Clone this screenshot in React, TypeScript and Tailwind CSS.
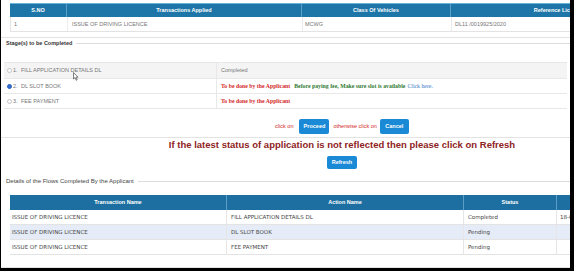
import React from "react";

const stages = [
  { no: "1.", name: "FILL APPLICATION DETAILS DL", done: true, checked: false },
  { no: "2.", name: "DL SLOT BOOK", done: false, checked: true },
  { no: "3.", name: "FEE PAYMENT", done: false, checked: false },
];

const flows = [
  { action: "FILL APPLICATION DETAILS DL", status: "Completed", date: "18-0" },
  { action: "DL SLOT BOOK", status: "Pending", date: "" },
  { action: "FEE PAYMENT", status: "Pending", date: "" },
];

function Legend({ title, bold }: { title: string; bold?: boolean }) {
  return (
    <div className="flex items-center h-[8px] pl-[5px]">
      <span className={bold ? "text-[5.5px] font-bold text-[#333] whitespace-nowrap" : "text-[6px] text-[#444] whitespace-nowrap"}>
        {title}
      </span>
      <div className="flex-1 ml-[4px] border-t border-[#dddddd]" />
    </div>
  );
}

export default function App() {
  return (
    <div className="w-[574px] h-[271px] bg-black overflow-hidden">
      <div className="ml-[1px] w-[569px] h-[268px] bg-white overflow-hidden relative">
        <div className="w-[682px] font-['Liberation_Sans',Arial,sans-serif]">
          {/* Applied transaction */}
          <div className="pt-[3px] pl-[9px]">
            <div className="grid grid-cols-[57px_235px_149px_223px] h-[14px] bg-[#1e76a8] border-t border-[#6ab4dc] text-white text-[5.5px] font-bold">
              <div className="flex items-center justify-center border-r border-[#5a9dc6]">S.NO</div>
              <div className="flex items-center justify-center border-r border-[#5a9dc6]">Transactions Applied</div>
              <div className="flex items-center justify-center border-r border-[#5a9dc6]">Class Of Vehicles</div>
              <div className="flex items-center justify-center">Reference Licence No</div>
            </div>
            <div className="grid grid-cols-[57px_235px_149px_223px] h-[15px] border-b border-l border-[#e3e3e3] text-[5.5px] text-[#777]">
              <div className="flex items-center pl-[3px] border-r border-[#ececec]">1</div>
              <div className="flex items-center pl-[4px] border-r border-[#ececec]">ISSUE OF DRIVING LICENCE</div>
              <div className="flex items-center pl-[2px] border-r border-[#ececec]">MCWG</div>
              <div className="flex items-center pl-[3px]">DL11 /0019925/2020</div>
            </div>
          </div>
          <div className="mt-[5px] border-t border-[#e3e3e3]" />

          {/* Stages */}
          <div className="mt-[1px]">
            <Legend title="Stage(s) to be Completed" bold />
          </div>
          <div className="mt-[15px] ml-[3px] w-[563px] border-t border-[#e8e8e8]">
            {stages.map((s, i) => (
              <div
                key={i}
                className={
                  i === 0
                    ? "grid grid-cols-[213px_1fr] h-[16px] bg-[#f4f4f4] border-b border-[#e8e8e8]"
                    : "grid grid-cols-[213px_1fr] h-[15px] border-b border-[#e8e8e8]"
                }
              >
                <div className="flex items-center pl-[3px] border-r border-[#e8e8e8] text-[5.5px] text-[#777]">
                  {s.checked ? (
                    <span className="w-[5px] h-[5px] rounded-full bg-[#2f6fd6] border border-[#2a5fb8]" />
                  ) : (
                    <span className="w-[5px] h-[5px] rounded-full border border-[#c4c4c4] bg-white" />
                  )}
                  <span className="ml-[1px] w-[8px]">{s.no}</span>
                  <span>{s.name}</span>
                </div>
                <div className="flex items-center pl-[4px] whitespace-nowrap">
                  {s.done ? (
                    <span className="text-[5.5px] text-[#777]">Completed</span>
                  ) : (
                    <span className="font-['Liberation_Serif','Times_New_Roman',serif] text-[5.8px] font-bold">
                      <span className="text-[#d22a2a]">To be done by the Applicant</span>
                      {i === 1 && (
                        <>
                          <span className="text-[#2f7a2f] ml-[4px]">Before paying fee, Make sure slot is available</span>
                          <span className="text-[#3a78c8] font-normal ml-[2px]">Click here.</span>
                        </>
                      )}
                    </span>
                  )}
                </div>
              </div>
            ))}
          </div>

          {/* Proceed / cancel */}
          <div className="mt-[10px] h-[15px] flex items-center justify-center text-[5.5px] text-[#d22a2a]">
            <span>click on</span>
            <button className="ml-[6px] w-[30px] h-[15px] rounded-[2px] bg-[#1a8ad6] text-white font-bold">Proceed</button>
            <span className="ml-[4px]">otherwise click on</span>
            <button className="ml-[3px] w-[29px] h-[15px] rounded-[2px] bg-[#1a8ad6] text-white font-bold">Cancel</button>
          </div>
          <div className="mt-[3px] border-t border-[#e3e3e3]" />
          <div className="mt-[1px] h-[11px] flex items-center justify-center text-[9.5px] leading-[11px] font-bold text-[#8e2323] whitespace-nowrap">
            If the latest status of application is not reflected then please click on Refresh
          </div>
          <div className="mt-[6px] flex justify-center">
            <button className="w-[30px] h-[13px] rounded-[2px] bg-[#1a8ad6] text-white text-[5.5px] font-bold">Refresh</button>
          </div>

          {/* Completed flows */}
          <div className="mt-[8px]">
            <Legend title="Details of the Flows Completed By the Applicant" />
          </div>
          <div className="mt-[10px] pl-[9px]">
            <div className="grid grid-cols-[217px_237px_93px_117px] h-[15px] bg-[#1c6fa0] text-white text-[5.5px] font-bold">
              <div className="flex items-center justify-center border-r border-[#5a9dc6]">Transaction Name</div>
              <div className="flex items-center justify-center border-r border-[#5a9dc6]">Action Name</div>
              <div className="flex items-center justify-center border-r border-[#5a9dc6]">Status</div>
              <div className="flex items-center justify-center">Date</div>
            </div>
            {flows.map((f, i) => (
              <div
                key={i}
                className={
                  i === 1
                    ? "grid grid-cols-[217px_237px_93px_117px] h-[15px] bg-[#e5ebf7] border-b border-[#e3e3e3] font-['DejaVu_Sans',Verdana,sans-serif] text-[5.5px] text-[#444]"
                    : "grid grid-cols-[217px_237px_93px_117px] h-[15px] bg-white border-b border-[#e3e3e3] font-['DejaVu_Sans',Verdana,sans-serif] text-[5.5px] text-[#444]"
                }
              >
                <div className="flex items-center pl-[2px] border-r border-[#e6e6e6]">ISSUE OF DRIVING LICENCE</div>
                <div className="flex items-center pl-[4px] border-r border-[#e6e6e6]">{f.action}</div>
                <div className="flex items-center pl-[4px] border-r border-[#e6e6e6]">{f.status}</div>
                <div className="flex items-center pl-[3px]">{f.date}</div>
              </div>
            ))}
          </div>
          <div className="mt-[12px] border-t border-[#e3e3e3]" />
        </div>

        {/* mouse pointer */}
        <svg className="absolute left-[72px] top-[72px]" width="6" height="9" viewBox="0 0 6 9">
          <path d="M0.5 0.5 L0.5 7 L2 5.6 L3.2 8.3 L4.2 7.9 L3 5.2 L5 5.2 Z" fill="white" stroke="#333" strokeWidth="0.6" />
        </svg>
      </div>
    </div>
  );
}
